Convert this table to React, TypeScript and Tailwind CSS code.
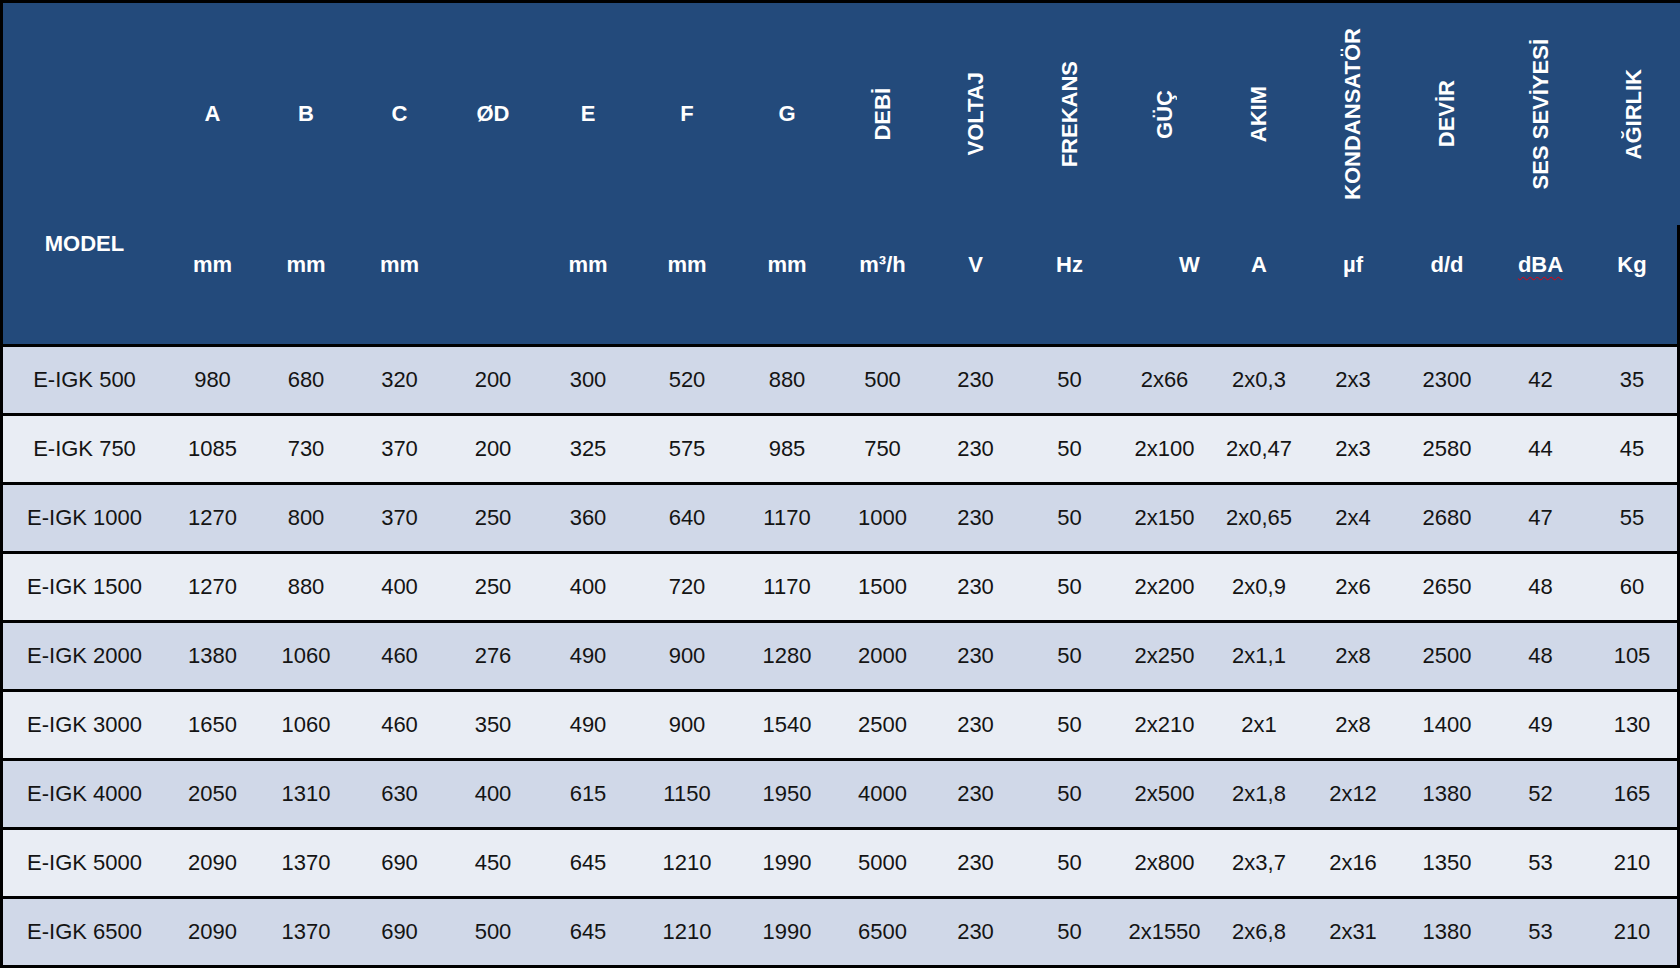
const cols =
  'grid grid-cols-[163px_93px_94px_93px_94px_96px_102px_98px_93px_93px_95px_95px_94px_94px_94px_93px_1fr]';

type Head = { label: string; vertical?: boolean; unit?: string };

const heads: Head[] = [
  { label: 'A', unit: 'mm' },
  { label: 'B', unit: 'mm' },
  { label: 'C', unit: 'mm' },
  { label: 'ØD' },
  { label: 'E', unit: 'mm' },
  { label: 'F', unit: 'mm' },
  { label: 'G', unit: 'mm' },
  { label: 'DEBİ', vertical: true, unit: 'm³/h' },
  { label: 'VOLTAJ', vertical: true, unit: 'V' },
  { label: 'FREKANS', vertical: true, unit: 'Hz' },
  { label: 'GÜÇ', vertical: true, unit: 'W' },
  { label: 'AKIM', vertical: true, unit: 'A' },
  { label: 'KONDANSATÖR', vertical: true, unit: 'µf' },
  { label: 'DEVİR', vertical: true, unit: 'd/d' },
  { label: 'SES SEVİYESİ', vertical: true, unit: 'dBA' },
  { label: 'AĞIRLIK', vertical: true, unit: 'Kg' },
];

const rows: string[][] = [
  ['E-IGK 500', '980', '680', '320', '200', '300', '520', '880', '500', '230', '50', '2x66', '2x0,3', '2x3', '2300', '42', '35'],
  ['E-IGK 750', '1085', '730', '370', '200', '325', '575', '985', '750', '230', '50', '2x100', '2x0,47', '2x3', '2580', '44', '45'],
  ['E-IGK 1000', '1270', '800', '370', '250', '360', '640', '1170', '1000', '230', '50', '2x150', '2x0,65', '2x4', '2680', '47', '55'],
  ['E-IGK 1500', '1270', '880', '400', '250', '400', '720', '1170', '1500', '230', '50', '2x200', '2x0,9', '2x6', '2650', '48', '60'],
  ['E-IGK 2000', '1380', '1060', '460', '276', '490', '900', '1280', '2000', '230', '50', '2x250', '2x1,1', '2x8', '2500', '48', '105'],
  ['E-IGK 3000', '1650', '1060', '460', '350', '490', '900', '1540', '2500', '230', '50', '2x210', '2x1', '2x8', '1400', '49', '130'],
  ['E-IGK 4000', '2050', '1310', '630', '400', '615', '1150', '1950', '4000', '230', '50', '2x500', '2x1,8', '2x12', '1380', '52', '165'],
  ['E-IGK 5000', '2090', '1370', '690', '450', '645', '1210', '1990', '5000', '230', '50', '2x800', '2x3,7', '2x16', '1350', '53', '210'],
  ['E-IGK 6500', '2090', '1370', '690', '500', '645', '1210', '1990', '6500', '230', '50', '2x1550', '2x6,8', '2x31', '1380', '53', '210'],
];

function UnitCell({ unit }: { unit?: string }) {
  if (!unit) return <div />;
  if (unit === 'W') return <div className="pt-[29px] pl-[62px] leading-none">W</div>;
  if (unit === 'dBA')
    return (
      <div className="pt-[29px] text-center leading-none">
        <span className="underline decoration-wavy decoration-red-600 decoration-1 underline-offset-4">dBA</span>
      </div>
    );
  return <div className="pt-[29px] text-center leading-none">{unit}</div>;
}

export default function App() {
  return (
    <div className="w-[1680px] h-[968px] overflow-hidden bg-white border-l-[3px] border-t-[3px] border-black font-['Liberation_Sans',Arial,sans-serif] text-[22px]">
      {/* Header */}
      <div className="bg-[#234a7b] text-white font-bold border-b-[3px] border-black">
        <div className={`${cols} h-[222px] items-center`}>
          <div />
          {heads.map((h) => (
            <div key={h.label} className="flex justify-center items-center">
              {h.vertical ? (
                <span className="[writing-mode:vertical-rl] rotate-180 leading-none whitespace-nowrap">{h.label}</span>
              ) : (
                <span className="leading-none">{h.label}</span>
              )}
            </div>
          ))}
        </div>
        <div className={`${cols} h-[119px] border-r-[3px] border-black`}>
          <div className="pt-[8px] text-center leading-none">MODEL</div>
          {heads.map((h) => (
            <UnitCell key={h.label} unit={h.unit} />
          ))}
        </div>
      </div>

      {/* Body */}
      {rows.map((r, i) => (
        <div
          key={r[0]}
          className={`${cols} h-[69px] shrink-0 border-b-[3px] border-r-[3px] border-black items-center text-[#141414] ${
            i % 2 === 0 ? 'bg-[#d0d8e8]' : 'bg-[#e9edf4]'
          }`}
        >
          {r.map((v, j) => (
            <div key={j} className="text-center leading-none whitespace-nowrap">
              {v}
            </div>
          ))}
        </div>
      ))}
    </div>
  );
}
